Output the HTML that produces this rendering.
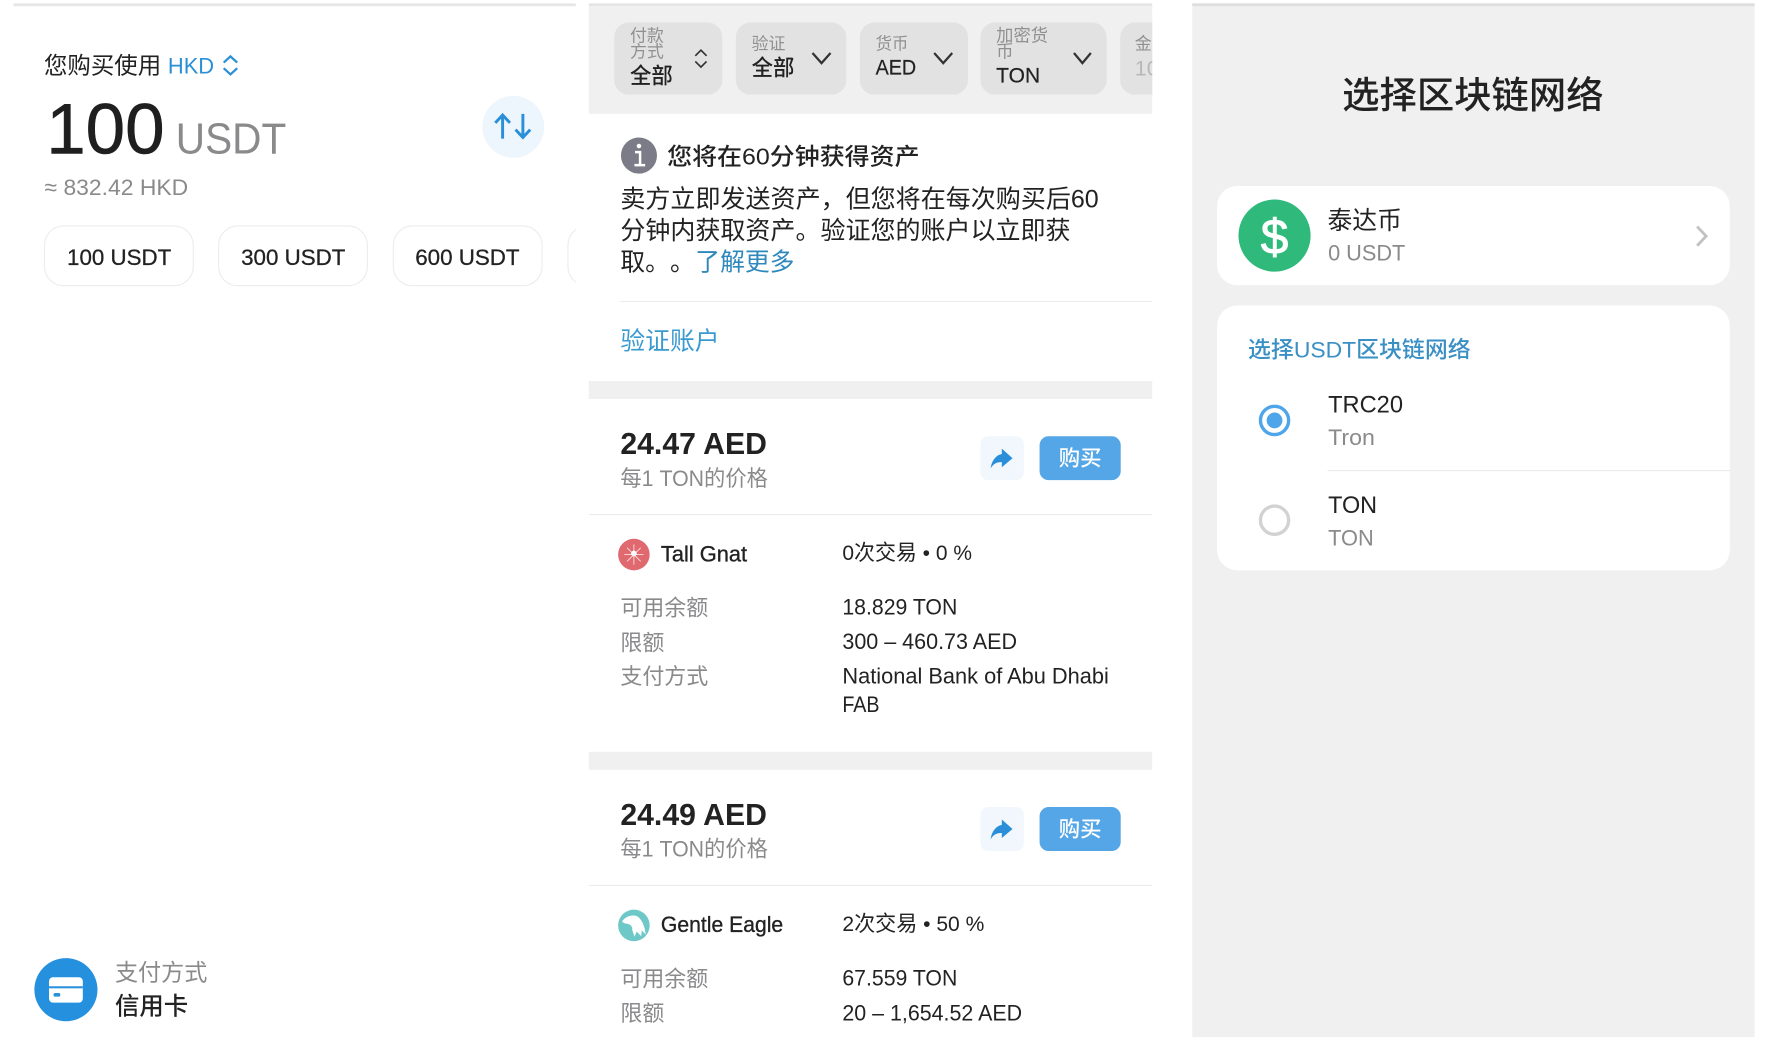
<!DOCTYPE html>
<html lang="zh"><head><meta charset="utf-8"><title>USDT</title>
<style>
html,body{margin:0;padding:0;background:#fff;width:1767px;height:1037px;overflow:hidden}
svg{display:block;filter:blur(.3px)}
text{font-family:"Liberation Sans","Noto Sans CJK SC",sans-serif;fill:#222}
.g{fill:#8a8a8c}.b{fill:#2b8fd6}.m{font-weight:500}
.lb{fill:#909090}
</style></head><body>
<svg width="1767" height="1037" viewBox="0 0 1568 920" preserveAspectRatio="none" xmlns="http://www.w3.org/2000/svg">
<defs>
<clipPath id="c1"><rect x="12" y="0" width="499" height="920"/></clipPath>
<clipPath id="c2"><rect x="522.500" y="0" width="500" height="920"/></clipPath>
</defs>
<rect width="1568" height="920" fill="#fff"/>

<!-- Panel 1 -->
<g clip-path="url(#c1)">
<rect x="12" y="3" width="499" height="2.500" fill="#e6e6e6"/>
<text x="39" y="65" font-size="20.500" textLength="104" lengthAdjust="spacingAndGlyphs">您购买使用</text>
<text x="149" y="65" font-size="20" textLength="41" lengthAdjust="spacingAndGlyphs" class="b">HKD</text>
<path d="M198.500 55.500 L204.500 50 L210.500 55.500 M198.500 60.500 L204.500 66 L210.500 60.500" fill="none" stroke="#2b8fd6" stroke-width="2"/>
<text x="41" y="136" font-size="63" textLength="105" lengthAdjust="spacingAndGlyphs" style="fill:#1f1f1f" stroke="#1f1f1f" stroke-width=".5">100</text>
<text x="156" y="136" font-size="39" textLength="98" lengthAdjust="spacingAndGlyphs" class="g">USDT</text>
<text x="39.500" y="173" font-size="20" textLength="127.500" lengthAdjust="spacingAndGlyphs" class="g">≈ 832.42 HKD</text>
<circle cx="455.500" cy="112.500" r="27.500" fill="#eef6fd"/>
<path d="M446 123 V102 M439.500 109 L446 102 L452.500 109 M464 101 V122 M457.500 115 L464 122 L470.500 115" fill="none" stroke="#2a8fd8" stroke-width="2.600"/>
<g fill="#fff" stroke="#ececec" stroke-width="1">
<rect x="39.500" y="200.500" width="132" height="53" rx="17"/>
<rect x="194" y="200.500" width="132" height="53" rx="17"/>
<rect x="349" y="200.500" width="132" height="53" rx="17"/>
<rect x="504" y="200.500" width="132" height="53" rx="17"/>
</g>
<text x="59.500" y="235" font-size="20" textLength="92.500" lengthAdjust="spacingAndGlyphs" stroke="#222" stroke-width=".25">100 USDT</text>
<text x="214" y="235" font-size="20" textLength="92.500" lengthAdjust="spacingAndGlyphs" stroke="#222" stroke-width=".25">300 USDT</text>
<text x="368.500" y="235" font-size="20" textLength="92.500" lengthAdjust="spacingAndGlyphs" stroke="#222" stroke-width=".25">600 USDT</text>
<circle cx="58.500" cy="878" r="28" fill="#2590dd"/>
<rect x="43.500" y="867" width="30" height="22.500" rx="3.500" fill="#fff"/>
<rect x="43.500" y="875" width="30" height="1.800" fill="#2590dd"/>
<rect x="47.500" y="881" width="6" height="3.200" rx="1.500" fill="#2590dd"/>
<text x="102" y="870" font-size="20.500" textLength="82" lengthAdjust="spacingAndGlyphs" class="g">支付方式</text>
<text x="102" y="900" font-size="21.500" textLength="65" lengthAdjust="spacingAndGlyphs" class="m">信用卡</text>
</g>

<!-- Panel 2 -->
<g clip-path="url(#c2)">
<rect x="522" y="3" width="501" height="2.500" fill="#e4e4e4"/>
<rect x="522" y="5.500" width="501" height="95.500" fill="#f0f0f0"/>
<g fill="#e2e2e2">
<rect x="545" y="20" width="96" height="64" rx="13"/>
<rect x="653" y="20" width="98" height="64" rx="13"/>
<rect x="763" y="20" width="96" height="64" rx="13"/>
<rect x="870" y="20" width="112" height="64" rx="13"/>
<rect x="994" y="20" width="60" height="64" rx="13"/>
</g>
<text x="559" y="37" font-size="15" textLength="30" lengthAdjust="spacingAndGlyphs" class="lb">付款</text>
<text x="559" y="51" font-size="15" textLength="30" lengthAdjust="spacingAndGlyphs" class="lb">方式</text>
<text x="559" y="74" font-size="19.500" textLength="38" lengthAdjust="spacingAndGlyphs" class="m">全部</text>
<path d="M617 49.500 L622 44.500 L627 49.500 M617 54.500 L622 59.500 L627 54.500" fill="none" stroke="#333" stroke-width="1.500"/>
<text x="667" y="44" font-size="15" textLength="30" lengthAdjust="spacingAndGlyphs" class="lb">验证</text>
<text x="667" y="67" font-size="19.500" textLength="38" lengthAdjust="spacingAndGlyphs" class="m">全部</text>
<path d="M721 47 L729 56 L737 47" fill="none" stroke="#333" stroke-width="2"/>
<text x="777" y="44" font-size="15" textLength="29" lengthAdjust="spacingAndGlyphs" class="lb">货币</text>
<text x="777" y="66" font-size="19" textLength="36" lengthAdjust="spacingAndGlyphs" stroke="#222" stroke-width=".2">AED</text>
<path d="M829 47 L837 56 L845 47" fill="none" stroke="#333" stroke-width="2"/>
<text x="884" y="37" font-size="15.500" textLength="46" lengthAdjust="spacingAndGlyphs" class="lb">加密货</text>
<text x="884" y="51" font-size="15.500" class="lb">币</text>
<text x="884" y="73" font-size="19" textLength="39" lengthAdjust="spacingAndGlyphs" stroke="#222" stroke-width=".2">TON</text>
<path d="M953 47 L960.500 56 L968 47" fill="none" stroke="#333" stroke-width="2"/>
<text x="1007" y="44" font-size="15" class="lb">金</text>
<text x="1007" y="67" font-size="19" style="fill:#b8b8b8">10</text>

<circle cx="567" cy="138" r="16" fill="#7c7c88"/>
<path d="M563.500 135 H568 V146 M563 146.500 H572.500" fill="none" stroke="#fff" stroke-width="2.200"/>
<circle cx="567" cy="129.500" r="2" fill="#fff"/>
<text x="592" y="146" font-size="20.500" textLength="224" lengthAdjust="spacingAndGlyphs" class="m">您将在60分钟获得资产</text>
<text x="550.500" y="184" font-size="22" textLength="424.500" lengthAdjust="spacingAndGlyphs">卖方立即发送资产，但您将在每次购买后60</text>
<text x="550.500" y="212" font-size="22" textLength="399.500" lengthAdjust="spacingAndGlyphs">分钟内获取资产。验证您的账户以立即获</text>
<text x="550.500 572.500 594.500" y="240" font-size="22">取。。</text>
<text x="617" y="240" font-size="22" textLength="88" lengthAdjust="spacingAndGlyphs" style="fill:#2f88bc">了解更多</text>
<rect x="550.500" y="267" width="472" height="1" fill="#ebebeb"/>
<text x="550.500" y="310" font-size="22" textLength="88" lengthAdjust="spacingAndGlyphs" style="fill:#3a9ad0">验证账户</text>
<rect x="522" y="338" width="501" height="16" fill="#f0f0f0"/>

<!-- Offer 1 -->
<text x="550.500" y="403" font-size="27" font-weight="700" textLength="130" lengthAdjust="spacingAndGlyphs">24.47 AED</text>
<text x="550.500" y="431" font-size="19.500" textLength="131" lengthAdjust="spacingAndGlyphs" class="g">每1 TON的价格</text>
<rect x="870" y="387" width="38.500" height="39" rx="7" fill="#f1f7fd"/>
<path d="M889 398 L898.500 406.500 L889 414.500 V410 C884.500 409.800 881.500 411.500 879 415.500 C880 409 883.500 403.800 889 402.800 Z" fill="#2a8fd8"/>
<rect x="922.500" y="387" width="72" height="39" rx="8" fill="#55a6e6"/>
<text x="939.500" y="413" font-size="19" textLength="38" lengthAdjust="spacingAndGlyphs" class="m" style="fill:#fff">购买</text>
<rect x="522" y="456" width="501" height="1" fill="#ebebeb"/>
<circle cx="562.500" cy="492" r="14" fill="#e0686f"/>
<path d="M562.500 483 V501 M554 492 H571 M556.500 486 L568.500 498 M568.500 486 L556.500 498" stroke="#fff" stroke-width=".8" fill="none" opacity=".8"/>
<circle cx="562.500" cy="491" r="2.500" fill="#fff"/>
<text x="586.500" y="498" font-size="19.500" textLength="76.500" lengthAdjust="spacingAndGlyphs" stroke="#222" stroke-width=".3">Tall Gnat</text>
<text x="747.500" y="497" font-size="19" textLength="115" lengthAdjust="spacingAndGlyphs">0次交易 • 0 %</text>
<text x="550.500" y="546" font-size="19.500" textLength="78" lengthAdjust="spacingAndGlyphs" class="g">可用余额</text>
<text x="747.500" y="545" font-size="19.500" textLength="102" lengthAdjust="spacingAndGlyphs">18.829 TON</text>
<text x="550.500" y="577" font-size="19.500" textLength="39" lengthAdjust="spacingAndGlyphs" class="g">限额</text>
<text x="747.500" y="576" font-size="19.500" textLength="155" lengthAdjust="spacingAndGlyphs">300 – 460.73 AED</text>
<text x="550.500" y="607" font-size="19.500" textLength="78" lengthAdjust="spacingAndGlyphs" class="g">支付方式</text>
<text x="747.500" y="606.500" font-size="19.500" textLength="236.500" lengthAdjust="spacingAndGlyphs">National Bank of Abu Dhabi</text>
<text x="747.500" y="631.500" font-size="19.500" textLength="33" lengthAdjust="spacingAndGlyphs">FAB</text>
<rect x="522" y="667" width="501" height="16" fill="#f0f0f0"/>

<!-- Offer 2 -->
<text x="550.500" y="732" font-size="27" font-weight="700" textLength="130" lengthAdjust="spacingAndGlyphs">24.49 AED</text>
<text x="550.500" y="760" font-size="19.500" textLength="131" lengthAdjust="spacingAndGlyphs" class="g">每1 TON的价格</text>
<rect x="870" y="716" width="38.500" height="39" rx="7" fill="#f1f7fd"/>
<path d="M889 727 L898.500 735.500 L889 743.500 V739 C884.500 738.800 881.500 740.500 879 744.500 C880 738 883.500 732.800 889 731.800 Z" fill="#2a8fd8"/>
<rect x="922.500" y="716" width="72" height="39" rx="8" fill="#55a6e6"/>
<text x="939.500" y="742" font-size="19" textLength="38" lengthAdjust="spacingAndGlyphs" class="m" style="fill:#fff">购买</text>
<rect x="522" y="785" width="501" height="1" fill="#ebebeb"/>
<circle cx="562.500" cy="821" r="14" fill="#6fc8c8"/>
<path d="M552 817.500 C555 813 560 811.500 564.500 812.500 C569 814 572.500 822 573 829 L569.500 825.500 L569 830.500 L565 826.500 L563 831 L561 825 C561.500 822 559.500 820 556.500 819.500 C555 819.500 553.500 819 552 817.500 Z" fill="#fff"/>
<text x="586.500" y="827" font-size="19.500" textLength="108.500" lengthAdjust="spacingAndGlyphs" stroke="#222" stroke-width=".3">Gentle Eagle</text>
<text x="747.500" y="826" font-size="19" textLength="126" lengthAdjust="spacingAndGlyphs">2次交易 • 50 %</text>
<text x="550.500" y="875" font-size="19.500" textLength="78" lengthAdjust="spacingAndGlyphs" class="g">可用余额</text>
<text x="747.500" y="874.500" font-size="19.500" textLength="102" lengthAdjust="spacingAndGlyphs">67.559 TON</text>
<text x="550.500" y="906" font-size="19.500" textLength="39" lengthAdjust="spacingAndGlyphs" class="g">限额</text>
<text x="747.500" y="905.500" font-size="19.500" textLength="159.500" lengthAdjust="spacingAndGlyphs">20 – 1,654.52 AED</text>
<text x="550.500" y="937" font-size="19.500" textLength="78" lengthAdjust="spacingAndGlyphs" class="g">支付方式</text>
</g>

<!-- Panel 3 -->
<rect x="1058" y="3" width="499" height="917" fill="#f0f0f0"/>
<rect x="1058" y="3" width="499" height="2.500" fill="#dedede"/>
<text x="1191" y="96" font-size="33" textLength="232" lengthAdjust="spacingAndGlyphs" class="m">选择区块链网络</text>
<rect x="1080" y="165" width="455" height="88" rx="18" fill="#fff"/>
<circle cx="1131" cy="209" r="32" fill="#2fba7c"/>
<text x="1131" y="225" font-size="44" text-anchor="middle" style="fill:#fff" stroke="#fff" stroke-width=".8">$</text>
<text x="1178" y="203" font-size="22" textLength="66" lengthAdjust="spacingAndGlyphs">泰达币</text>
<text x="1178.500" y="231" font-size="20" textLength="68.500" lengthAdjust="spacingAndGlyphs" class="g">0 USDT</text>
<path d="M1506 201 L1514 209.500 L1506 218" fill="none" stroke="#c2c2c2" stroke-width="2.500"/>
<rect x="1080" y="271" width="455" height="235" rx="18" fill="#fff"/>
<text x="1107.500" y="317" font-size="20" textLength="197.500" lengthAdjust="spacingAndGlyphs" class="m" style="fill:#3a8fc4">选择USDT区块链网络</text>
<circle cx="1131" cy="373" r="12.500" fill="none" stroke="#4ea5ea" stroke-width="3"/>
<circle cx="1131" cy="373" r="7" fill="#4ea5ea"/>
<text x="1178.500" y="366" font-size="21.500" textLength="66.500" lengthAdjust="spacingAndGlyphs">TRC20</text>
<text x="1178.500" y="395" font-size="20" textLength="41.500" lengthAdjust="spacingAndGlyphs" class="g">Tron</text>
<rect x="1178" y="417" width="357" height="1" fill="#ebebeb"/>
<circle cx="1131" cy="461.500" r="12.500" fill="none" stroke="#d2d2d2" stroke-width="3"/>
<text x="1178.500" y="455" font-size="21.500" textLength="43.500" lengthAdjust="spacingAndGlyphs">TON</text>
<text x="1178.500" y="484" font-size="20" textLength="40.500" lengthAdjust="spacingAndGlyphs" class="g">TON</text>
</svg>
</body></html>
